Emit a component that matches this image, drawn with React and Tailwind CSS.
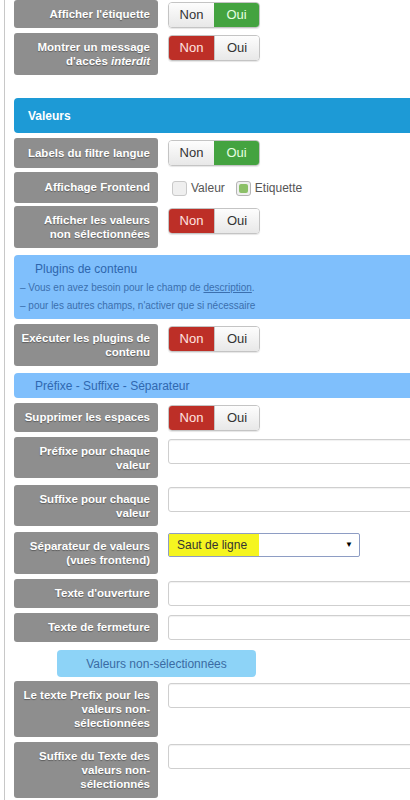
import React from "react";

const font = { fontFamily: '"Liberation Sans", Arial, sans-serif' };

function Label({ children, h }) {
  return (
    <div className={"w-[144px] shrink-0 whitespace-nowrap rounded-[3px] bg-[#8e8e8e] pl-[2px] pr-[8px] py-[7px] text-right text-[11.5px] font-bold leading-[14px] text-white [text-shadow:0_1px_1px_rgba(0,0,0,0.35)] " + h}>
      {children}
    </div>
  );
}

function Toggle({ value }) {
  const non = value === "non";
  return (
    <div className="mt-[2px] flex h-[26px] w-[92px] overflow-hidden rounded-[4px] border border-[#c4c4c4] text-[13px] shadow-[0_1px_1px_rgba(0,0,0,0.1)]">
      <div
        className={
          non
            ? "flex w-1/2 items-center justify-center bg-[#bd2f27] text-[#ffe3e0]"
            : "flex w-1/2 items-center justify-center bg-gradient-to-b from-[#fdfdfd] to-[#e8e8e8] text-[#333]"
        }
      >
        Non
      </div>
      <div
        className={
          !non
            ? "flex w-1/2 items-center justify-center bg-[#44a340] text-[#e6ffe0]"
            : "flex w-1/2 items-center justify-center border-l border-[#c4c4c4] bg-gradient-to-b from-[#fdfdfd] to-[#e8e8e8] text-[#333]"
        }
      >
        Oui
      </div>
    </div>
  );
}

function Input() {
  return (
    <div className="mt-[2px] h-[25px] w-[260px] rounded-[3px] border border-[#cfcfcf] bg-white shadow-[inset_0_1px_1px_rgba(0,0,0,0.06)]" />
  );
}

function Row({ label, children, className = "", h = "" }) {
  return (
    <div className={"flex items-start gap-[10px] " + className}>
      <Label h={h}>{label}</Label>
      {children}
    </div>
  );
}

export default function App() {
  return (
    <div className="h-[800px] w-[410px] overflow-hidden bg-white" style={font}>
      <div className="ml-[4px] h-full w-[440px] border-l border-[#c8c8c8] pl-[9px]">
        <Row label="Afficher l'étiquette" h="h-[28px]">
          <Toggle value="oui" />
        </Row>
        <Row className="mt-[5px]" h="h-[42px]" label={<>Montrer un message<br />d'accès <i>interdit</i></>}>
          <Toggle value="non" />
        </Row>

        <div className="mt-[23px] flex h-[35px] items-center rounded-[4px] bg-[#1d9ad6] pl-[14px] text-[12px] font-bold text-white">
          Valeurs
        </div>

        <Row className="mt-[5px]" h="h-[30px] pt-[8px]" label="Labels du filtre langue">
          <Toggle value="oui" />
        </Row>
        <Row className="mt-[4px]" h="h-[31px] pt-[8px]" label="Affichage Frontend">
          <div className="mt-[7px] flex items-center text-[12px] text-[#555]">
            <span className="ml-[4px] h-[15px] w-[15px] rounded-[3px] border border-[#c9c9c9] bg-[#efefef]" />
            <span className="ml-[4px]">Valeur</span>
            <span className="ml-[11px] flex h-[15px] w-[15px] items-center justify-center rounded-[3px] border border-[#b5b5b5] bg-[#f0f0f0]">
              <span className="h-[9px] w-[9px] rounded-[2px] bg-[#8cc068]" />
            </span>
            <span className="ml-[4px]">Etiquette</span>
          </div>
        </Row>
        <Row className="mt-[3px]" h="h-[42px]" label={<>Afficher les valeurs<br />non sélectionnées</>}>
          <Toggle value="non" />
        </Row>

        <div className="mt-[7px] h-[64px] rounded-[4px] bg-[#7fbffc] pl-[6px] pt-[7px]">
          <div className="pl-[15px] text-[12px] leading-[14px] text-[#2e66ad]">Plugins de contenu</div>
          <div className="mt-[6px] text-[10px] leading-[12px] text-[#3b6fae]">
            – Vous en avez besoin pour le champ de <span className="underline">description</span>.
          </div>
          <div className="mt-[6px] text-[10px] leading-[12px] text-[#3b6fae]">
            – pour les autres champs, n'activer que si nécessaire
          </div>
        </div>

        <Row className="mt-[5px]" h="h-[42px]" label={<>Exécuter les plugins de<br />contenu</>}>
          <Toggle value="non" />
        </Row>

        <div className="mt-[7px] flex h-[25px] items-center rounded-[4px] bg-[#7fbffc] pl-[21px] text-[12px] text-[#3068b0]">
          Préfixe - Suffixe - Séparateur
        </div>

        <Row className="mt-[5px]" h="h-[29px]" label="Supprimer les espaces">
          <Toggle value="non" />
        </Row>
        <Row className="mt-[5px]" h="h-[41px]" label={<>Préfixe pour chaque<br />valeur</>}>
          <Input />
        </Row>
        <Row className="mt-[7px]" h="h-[41px]" label={<>Suffixe pour chaque<br />valeur</>}>
          <Input />
        </Row>
        <Row className="mt-[6px]" h="h-[42px]" label={<>Séparateur de valeurs<br />(vues frontend)</>}>
          <div className="mt-[1px] flex h-[24px] w-[192px] items-center justify-between rounded-[2px] border border-[#8e9dc4] bg-white pr-[6px] text-[12px] text-[#333]">
            <span className="flex h-full w-[90px] items-center bg-[#f5f520] pl-[8px]">Saut de ligne</span>
            <span className="text-[8px] text-black">▼</span>
          </div>
        </Row>
        <Row className="mt-[5px]" h="h-[29px]" label="Texte d'ouverture">
          <Input />
        </Row>
        <Row className="mt-[5px]" h="h-[29px]" label="Texte de fermeture">
          <Input />
        </Row>

        <div className="ml-[43px] mt-[8px] flex h-[27px] w-[199px] items-center justify-center rounded-[4px] bg-[#8dd3f7] text-[12px] text-[#3a6ba3]">
          Valeurs non-sélectionnées
        </div>

        <Row className="mt-[4px]" h="h-[56px]" label={<>Le texte Prefix pour les<br />valeurs non-<br />sélectionnées</>}>
          <Input />
        </Row>
        <Row className="mt-[5px]" h="h-[56px]" label={<>Suffixe du Texte des<br />valeurs non-<br />sélectionnés</>}>
          <Input />
        </Row>
      </div>
    </div>
  );
}
